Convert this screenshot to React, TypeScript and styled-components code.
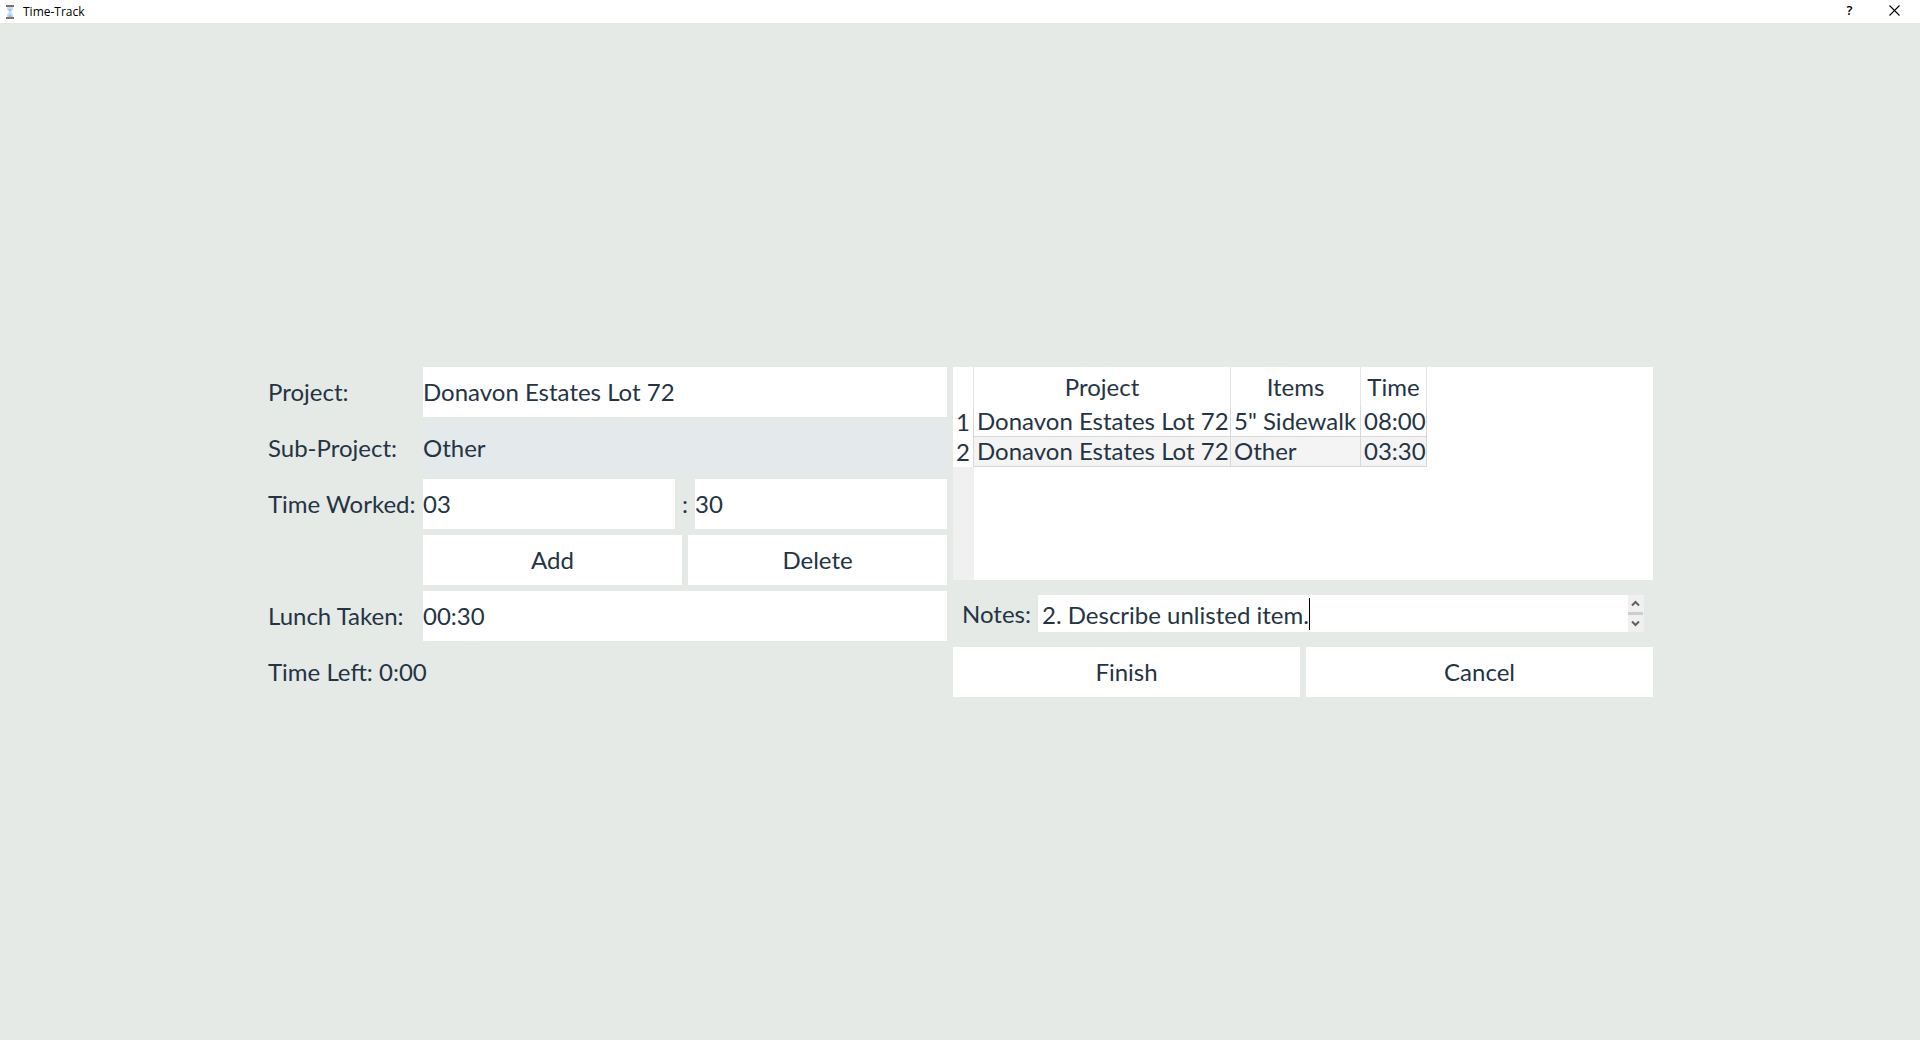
import React from "react";
import styled, { createGlobalStyle } from "styled-components";

const ink = "#243444";
const uiFont = `Lato, "Noto Sans", sans-serif`;

const GlobalStyle = createGlobalStyle`
  *, *::before, *::after { box-sizing: border-box; }
  body { margin: 0; background: #e5eae6; }
  body, button, input, textarea {
    font-family: ${uiFont};
    font-size: 24px;
    line-height: 30px;
    color: ${ink};
  }
`;

const Window = styled.div`
  display: flex;
  flex-direction: column;
  min-height: 100vh;
`;

const TitleBar = styled.header`
  display: flex;
  align-items: center;
  height: 23px;
  padding: 0 3px 0 4px;
  gap: 7px;
  background: #fff;
`;

const Title = styled.h1`
  margin: 0;
  flex: 1;
  font: 400 12px/20px "Open Sans", sans-serif;
  color: #000;
`;

const WindowControls = styled.div`
  display: flex;
  align-self: flex-start;
`;

const WindowButton = styled.button`
  display: flex;
  align-items: center;
  justify-content: center;
  width: 45px;
  height: 20px;
  padding: 0;
  border: 0;
  background: transparent;
  font: 600 13px/20px "Open Sans", sans-serif;
  color: #000;
`;

const Main = styled.main`
  flex: 1;
  display: flex;
  align-items: center;
  padding: 1px 267px 0 268px;
`;

const Form = styled.form`
  flex: 1;
  display: grid;
  grid-template-columns: minmax(0, 679fr) minmax(0, 700fr);
  gap: 6px;
`;

const Fields = styled.div`
  display: grid;
  grid-template-columns: 149px minmax(0, 1fr);
  grid-auto-rows: 50px;
  align-items: center;
  gap: 6px;
`;

const Label = styled.label`
  white-space: nowrap;
`;

const TextBox = styled.input`
  flex: 1;
  width: 100%;
  min-width: 0;
  height: 50px;
  padding: 0 0 2px;
  border: 0;
  border-radius: 0;
  outline: 0;
  background: #fff;

  &:disabled {
    background: #e4e9eb;
    color: ${ink};
  }
`;

const Row = styled.div`
  display: flex;
  gap: 6px;
`;

const FieldRow = styled(Row)`
  grid-column: 2;
  align-items: center;
`;

const Colon = styled.span`
  width: 8px;
  text-align: center;
`;

const PushButton = styled.button`
  flex: 1;
  height: 50px;
  padding: 0;
  border: 0;
  background: #fff;
`;

const TimeLeft = styled.output`
  grid-column: 1 / -1;
`;

const Summary = styled.div`
  display: flex;
  flex-direction: column;
  gap: 6px;
`;

const TablePanel = styled.div`
  flex: 1;
  display: flex;
  flex-direction: column;
  align-items: flex-start;
  background: #fff;
`;

const Gutter = styled.div`
  flex: 1;
  width: 21px;
  background: #f0f0f0;
`;

const Table = styled.table`
  table-layout: fixed;
  width: 474px;
  border-collapse: separate;
  border-spacing: 0;
`;

const Column = styled.col<{ $width: number }>`
  width: ${(p) => p.$width}px;
`;

const HeadCell = styled.th`
  height: 40px;
  padding: 0;
  border-right: 1px solid #e5e5e5;
  font-weight: 400;
  line-height: 30px;
`;

const RowNumber = styled.th`
  height: 30px;
  padding: 0;
  border-right: 1px solid #d8d8d8;
  font-weight: 400;
  line-height: 30px;
`;

const Cell = styled.td`
  height: 30px;
  padding: 0 0 2px 3px;
  border-right: 1px solid #d8d8d8;
  border-bottom: 1px solid #d8d8d8;
  line-height: 27px;
  white-space: nowrap;

  tr:nth-child(even) > & {
    background: #f4f4f4;
  }
`;

const Notes = styled.div`
  display: flex;
  align-items: center;
  gap: 6px;
  padding: 9px;
`;

const NotesLabel = styled(Label)`
  width: 70px;
`;

const NotesBox = styled.div`
  flex: 1;
  display: flex;
  align-items: center;
  height: 37px;
  padding-left: 4px;
  background: #fff;
`;

const NotesText = styled.textarea`
  field-sizing: content;
  height: 32px;
  padding: 2px 0 0;
  border: 0;
  outline: 0;
  resize: none;
  overflow: hidden;
  white-space: pre;
  background: transparent;
`;

const Caret = styled.span`
  height: 32px;
  border-left: 1px solid #000;
`;

const ScrollBar = styled.div`
  display: flex;
  flex-direction: column;
  width: 16px;
  height: 37px;
  margin-left: auto;
  padding-right: 1px;
  background: #f0f0f0;
`;

const ScrollButton = styled.button`
  flex: 1;
  display: flex;
  align-items: center;
  justify-content: center;
  padding: 0;
  border: 0;
  background: transparent;
`;

const Thumb = styled.div`
  height: 3px;
  background: #cdcdcd;
`;

const Hourglass = () => (
  <svg width="12" height="14" viewBox="0 0 12 14" aria-hidden="true">
    <path d="M3 1h6v3.500L7 7l2 2.500V13H3V9.500L5 7 3 4.500z" fill="#c3e0f7" />
    <path d="M4 4h4L6 6.500zM6 9l2.500 3h-5z" fill="#93c5ee" />
    <path d="M2 0h8v2H2zM2 12h8v2H2z" fill="#8a6f68" />
  </svg>
);

const CloseGlyph = () => (
  <svg width="11" height="11" viewBox="0 0 11 11" aria-hidden="true">
    <path d="M.5.5l10 10M10.500.5l-10 10" stroke="#000" strokeWidth="1.100" />
  </svg>
);

const Chevron = ({ down = false }: { down?: boolean }) => (
  <svg width="9" height="7" viewBox="0 0 9 7" aria-hidden="true">
    <path
      d={down ? "M1 1.500l3.500 3.500L8 1.500" : "M1 5.500L4.500 2 8 5.500"}
      fill="none"
      stroke="#606060"
      strokeWidth="2"
    />
  </svg>
);

const entries = [
  { project: "Donavon Estates Lot 72", item: '5" Sidewalk', time: "08:00" },
  { project: "Donavon Estates Lot 72", item: "Other", time: "03:30" },
];

export default function App() {
  return (
    <>
      <GlobalStyle />
      <Window>
        <TitleBar>
          <Hourglass />
          <Title>Time-Track</Title>
          <WindowControls>
            <WindowButton type="button" aria-label="Help">?</WindowButton>
            <WindowButton type="button" aria-label="Close">
              <CloseGlyph />
            </WindowButton>
          </WindowControls>
        </TitleBar>
        <Main>
          <Form onSubmit={(e) => e.preventDefault()}>
            <Fields>
              <Label htmlFor="project">Project:</Label>
              <TextBox id="project" defaultValue="Donavon Estates Lot 72" />
              <Label htmlFor="sub-project">Sub-Project:</Label>
              <TextBox id="sub-project" defaultValue="Other" disabled />
              <Label htmlFor="hours">Time Worked:</Label>
              <FieldRow>
                <TextBox id="hours" defaultValue="03" />
                <Colon>:</Colon>
                <TextBox aria-label="Minutes worked" defaultValue="30" />
              </FieldRow>
              <FieldRow>
                <PushButton type="button">Add</PushButton>
                <PushButton type="button">Delete</PushButton>
              </FieldRow>
              <Label htmlFor="lunch">Lunch Taken:</Label>
              <TextBox id="lunch" defaultValue="00:30" />
              <TimeLeft>Time Left: 0:00</TimeLeft>
            </Fields>
            <Summary>
              <TablePanel>
                <Table>
                  <colgroup>
                    <Column $width={21} />
                    <Column $width={257} />
                    <Column $width={130} />
                    <Column $width={66} />
                  </colgroup>
                  <thead>
                    <tr>
                      <HeadCell />
                      <HeadCell scope="col">Project</HeadCell>
                      <HeadCell scope="col">Items</HeadCell>
                      <HeadCell scope="col">Time</HeadCell>
                    </tr>
                  </thead>
                  <tbody>
                    {entries.map((entry, i) => (
                      <tr key={i}>
                        <RowNumber scope="row">{i + 1}</RowNumber>
                        <Cell>{entry.project}</Cell>
                        <Cell>{entry.item}</Cell>
                        <Cell>{entry.time}</Cell>
                      </tr>
                    ))}
                  </tbody>
                </Table>
                <Gutter />
              </TablePanel>
              <Notes>
                <NotesLabel htmlFor="notes">Notes:</NotesLabel>
                <NotesBox>
                  <NotesText id="notes" rows={1} defaultValue="2. Describe unlisted item." />
                  <Caret />
                  <ScrollBar>
                    <ScrollButton type="button" aria-label="Scroll up">
                      <Chevron />
                    </ScrollButton>
                    <Thumb />
                    <ScrollButton type="button" aria-label="Scroll down">
                      <Chevron down />
                    </ScrollButton>
                  </ScrollBar>
                </NotesBox>
              </Notes>
              <Row>
                <PushButton type="submit">Finish</PushButton>
                <PushButton type="button">Cancel</PushButton>
              </Row>
            </Summary>
          </Form>
        </Main>
      </Window>
    </>
  );
}
